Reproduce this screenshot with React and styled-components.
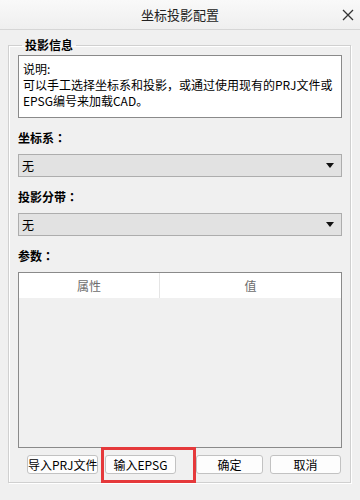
import styled, { createGlobalStyle } from "styled-components";

const GlobalStyle = createGlobalStyle`
  html, body {
    margin: 0;
    padding: 0;
    background: #f0f0f0;
  }
  body {
    font-family: "Noto Sans CJK SC", "Noto Sans", sans-serif;
    color: #000000;
  }
`;

function Label({ children }) {
  return (
    <StyleLabel>
      {children}
      <StyleColon>：</StyleColon>
    </StyleLabel>
  );
}

export default function App() {
  return (
    <StyleWindow>
      <GlobalStyle />
      <StyleTitleBar>
        <h1>坐标投影配置</h1>
        <StyleClose>
          <svg width="12" height="12" viewBox="0 0 12 12">
            <path d="M1 1 L11 11 M11 1 L1 11" stroke="#333" strokeWidth="1.3" fill="none" />
          </svg>
        </StyleClose>
      </StyleTitleBar>

      <StyleGroup>
        <legend>投影信息</legend>
        <StyleNote>
          <p>说明:</p>
          <p>可以手工选择坐标系和投影，或通过使用现有的PRJ文件或</p>
          <p>EPSG编号来加载CAD。</p>
        </StyleNote>

        <Label>坐标系</Label>
        <StyleSelect>
          <span>无</span>
          <StyleArrow />
        </StyleSelect>

        <Label>投影分带</Label>
        <StyleSelect>
          <span>无</span>
          <StyleArrow />
        </StyleSelect>

        <Label>参数</Label>
        <StyleTable>
          <StyleHeader>
            <StyleHeadCell width="140px">属性</StyleHeadCell>
            <StyleHeadCell>值</StyleHeadCell>
          </StyleHeader>
        </StyleTable>

        <StyleButtons>
          <StyleButtonGroup>
            <StyleButton width="71px">导入PRJ文件</StyleButton>
            <StyleMarked>
              <StyleButton width="71px">输入EPSG</StyleButton>
              <StyleHighlight />
            </StyleMarked>
          </StyleButtonGroup>
          <StyleButtonGroup>
            <StyleButton width="67px">确定</StyleButton>
            <StyleButton width="71px">取消</StyleButton>
          </StyleButtonGroup>
        </StyleButtons>
      </StyleGroup>
    </StyleWindow>
  );
}

const StyleWindow = styled.main`
  width: 360px;
  height: 500px;
  background-color: #f0f0f0;
  display: flex;
  flex-direction: column;
  overflow: hidden;
`;
const StyleTitleBar = styled.header`
  height: 29px;
  border-bottom: 1px solid #d6d6d6;
  background: linear-gradient(#f9f9f9, #efefef);
  display: flex;
  align-items: center;
  justify-content: center;
  position: relative;
  h1 {
    margin: 0;
    font-size: 13px;
    font-weight: 400;
    line-height: 16px;
    color: #222222;
  }
`;
const StyleClose = styled.div`
  position: absolute;
  right: 6px;
  top: 9px;
  width: 12px;
  height: 12px;
  display: flex;
`;
const StyleGroup = styled.fieldset`
  box-sizing: border-box;
  width: 343px;
  margin: 7px 0 0 8px;
  padding: 2px 8px 8px 9px;
  border: 1px solid #d0d0d0;
  box-shadow: inset 1px 1px 0 #ffffff, 1px 1px 0 #ffffff;
  display: flex;
  flex-direction: column;
  legend {
    margin-left: 4px;
    padding: 0 3px;
    font-size: 12px;
    font-weight: 700;
    line-height: 16px;
    color: #000000;
  }
`;
const StyleNote = styled.div`
  box-sizing: border-box;
  height: 63px;
  border: 1px solid #8a8a8a;
  background-color: #ffffff;
  padding: 5px 4px 0;
  p {
    margin: 0;
    font-size: 12px;
    line-height: 16px;
    white-space: nowrap;
  }
`;
const StyleLabel = styled.div`
  margin: 12px 0 8px;
  font-size: 12px;
  font-weight: 700;
  line-height: 16px;
`;
const StyleColon = styled.span`
  font-family: "Noto Sans CJK TC", "Noto Sans CJK SC", sans-serif;
`;
const StyleSelect = styled.div`
  box-sizing: border-box;
  height: 23px;
  border: 1px solid #adadad;
  background-color: #e2e2e2;
  display: flex;
  align-items: center;
  justify-content: space-between;
  padding: 0 7px 0 3px;
  span {
    font-size: 12px;
    line-height: 16px;
  }
`;
const StyleArrow = styled.div`
  width: 0;
  height: 0;
  border-left: 4px solid transparent;
  border-right: 4px solid transparent;
  border-top: 5px solid #111111;
`;
const StyleTable = styled.div`
  box-sizing: border-box;
  height: 176px;
  border: 1px solid #8a8a8a;
  background-color: #f0f0f0;
`;
const StyleHeader = styled.div`
  height: 25px;
  background-color: #ffffff;
  display: flex;
`;
const StyleHeadCell = styled.div`
  width: ${(props) => props.width || "auto"};
  flex: ${(props) => (props.width ? "none" : "1")};
  border-right: ${(props) => (props.width ? "1px solid #e5e5e5" : "none")};
  display: flex;
  align-items: center;
  justify-content: center;
  font-size: 12px;
  color: #6d6d6d;
`;
const StyleButtons = styled.div`
  margin-top: 7px;
  padding: 0 1px 0 9px;
  display: flex;
  justify-content: space-between;
`;
const StyleButtonGroup = styled.div`
  display: flex;
  gap: 7px;
`;
const StyleButton = styled.button`
  box-sizing: border-box;
  width: ${(props) => props.width};
  height: 19px;
  padding: 0;
  border: 1px solid #c2c2c2;
  border-radius: 3px;
  background-color: #fdfdfd;
  font-family: "Noto Sans CJK SC", "Noto Sans", sans-serif;
  font-size: 12px;
  line-height: 16px;
  color: #000000;
  white-space: nowrap;
`;
const StyleMarked = styled.div`
  position: relative;
  display: flex;
`;
const StyleHighlight = styled.div`
  position: absolute;
  left: -4px;
  top: -8px;
  width: 95px;
  height: 36px;
  box-sizing: border-box;
  border: 3px solid #e5393b;
  pointer-events: none;
`;
